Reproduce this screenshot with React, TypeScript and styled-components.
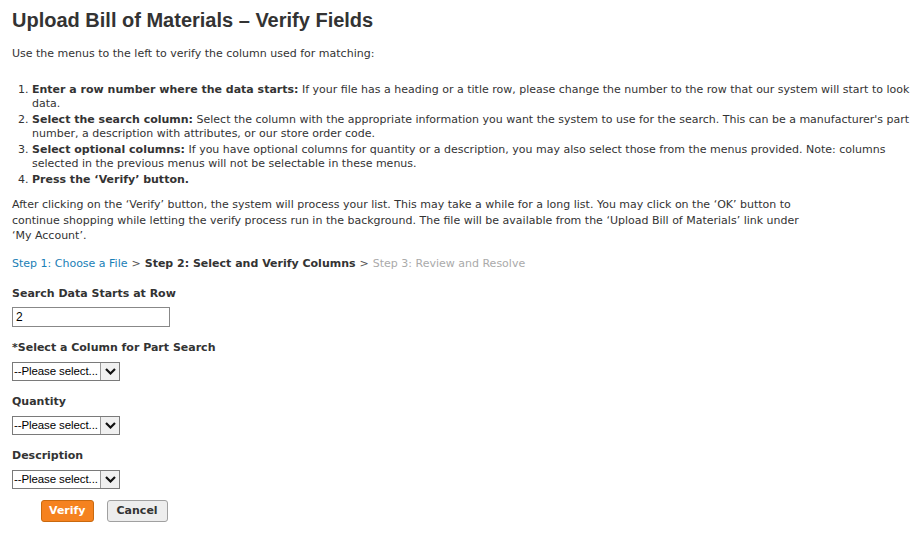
import React, { useState } from 'react'
import styled, { createGlobalStyle } from 'styled-components'

const GlobalStyle = createGlobalStyle`
  body {
    margin: 0;
    background: #fff;
    font-family: "DejaVu Sans", Verdana, sans-serif;
    font-size: 11px;
    color: #333;
  }
`

const Page = styled.div`
  padding: 8px 12px 12px 12px;
`

const Title = styled.h1`
  font-family: "Liberation Sans", Arial, sans-serif;
  font-size: 20px;
  font-weight: bold;
  line-height: 24px;
  color: #333;
  margin: 0 0 14px 0;
`

const Intro = styled.p`
  margin: 0 0 22px 0;
  line-height: 15px;
`

const Steps = styled.ol`
  margin: 0 0 10px 0;
  padding-left: 20px;
  line-height: 14px;

  li {
    margin-bottom: 2px;
  }

  b {
    font-weight: bold;
  }
`

const Note = styled.p`
  margin: 0 0 12px 0;
  line-height: 15.5px;
  max-width: 800px;
`

const Crumbs = styled.div`
  margin-bottom: 16px;
  line-height: 15px;
`

const Crumb = styled.span<{ $state: 'done' | 'current' | 'todo' }>`
  color: ${p => (p.$state === 'done' ? '#1a80b6' : p.$state === 'todo' ? '#aaa' : '#333')};
  font-weight: ${p => (p.$state === 'current' ? 'bold' : 'normal')};
`

const Sep = styled.span`
  color: #555;
  margin: 0 4px;
`

const Field = styled.div`
  display: flex;
  flex-direction: column;
  align-items: flex-start;
  margin-bottom: 14px;
`

const Label = styled.label`
  display: block;
  font-weight: bold;
  line-height: 14px;
  margin-bottom: 6px;
`

const TextInput = styled.input`
  box-sizing: border-box;
  width: 158px;
  height: 20px;
  border: 1px solid #888;
  padding: 0 3px;
  font-family: "Liberation Sans", Arial, sans-serif;
  font-size: 12px;
  color: #000;
  outline: none;
`

const SelectWrap = styled.div`
  position: relative;
  width: 108px;
  height: 19px;
  margin-top: 1px;
`

const Select = styled.select`
  box-sizing: border-box;
  width: 108px;
  height: 19px;
  border: 1px solid #7a7a7a;
  border-radius: 0;
  background: #fff;
  appearance: none;
  padding: 0 0 0 1px;
  font-family: "Liberation Sans", Arial, sans-serif;
  font-size: 11.5px;
  letter-spacing: -0.1px;
  color: #000;
  outline: none;
`

const Arrow = styled.span`
  position: absolute;
  top: 1px;
  right: 1px;
  width: 18px;
  height: 17px;
  border-left: 1px solid #999;
  background: #f0f0f0;
  display: flex;
  align-items: center;
  justify-content: center;
  pointer-events: none;
`

const Buttons = styled.div`
  display: flex;
  gap: 13px;
  padding-left: 29px;
  margin-top: -3px;
`

const Button = styled.button<{ $primary?: boolean }>`
  box-sizing: border-box;
  height: 22px;
  padding: 0 ${p => (p.$primary ? '7px' : '9px')};
  border-radius: 3px;
  font-family: "DejaVu Sans", Verdana, sans-serif;
  font-size: 11px;
  font-weight: bold;
  cursor: pointer;
  border: 1px solid ${p => (p.$primary ? '#c9690f' : '#a0a0a0')};
  background: ${p => (p.$primary ? '#f5821f' : '#ededed')};
  color: ${p => (p.$primary ? '#fff' : '#333')};
`

const Chevron = () => (
  <svg width="11" height="7" viewBox="0 0 11 7">
    <path d="M1 1 L5.5 5.5 L10 1" fill="none" stroke="#111" strokeWidth="2.2" />
  </svg>
)

const Dropdown = ({ id }: { id: string }) => (
  <SelectWrap>
    <Select id={id} defaultValue="">
      <option value="">--Please select...</option>
      <option value="A">Column A</option>
      <option value="B">Column B</option>
    </Select>
    <Arrow><Chevron /></Arrow>
  </SelectWrap>
)

const App = () => {
  const [row, setRow] = useState<string>('2')

  return (
    <Page>
      <GlobalStyle />
      <Title>Upload Bill of Materials – Verify Fields</Title>
      <Intro>Use the menus to the left to verify the column used for matching:</Intro>
      <Steps>
        <li><b>Enter a row number where the data starts:</b> If your file has a heading or a title row, please change the number to the row that our system will start to look data.</li>
        <li><b>Select the search column:</b> Select the column with the appropriate information you want the system to use for the search. This can be a manufacturer's part number, a description with attributes, or our store order code.</li>
        <li><b>Select optional columns:</b> If you have optional columns for quantity or a description, you may also select those from the menus provided. Note: columns selected in the previous menus will not be selectable in these menus.</li>
        <li><b>Press the ‘Verify’ button.</b></li>
      </Steps>
      <Note>
        After clicking on the ‘Verify’ button, the system will process your list. This may take a while for a long list. You may click on the ‘OK’ button to continue shopping while letting the verify process run in the background. The file will be available from the ‘Upload Bill of Materials’ link under ‘My Account’.
      </Note>
      <Crumbs>
        <Crumb $state="done">Step 1: Choose a File</Crumb>
        <Sep>&gt;</Sep>
        <Crumb $state="current">Step 2: Select and Verify Columns</Crumb>
        <Sep>&gt;</Sep>
        <Crumb $state="todo">Step 3: Review and Resolve</Crumb>
      </Crumbs>
      <Field>
        <Label htmlFor="startRow">Search Data Starts at Row</Label>
        <TextInput id="startRow" value={row} onChange={e => setRow(e.target.value)} />
      </Field>
      <Field>
        <Label htmlFor="partCol">*Select a Column for Part Search</Label>
        <Dropdown id="partCol" />
      </Field>
      <Field>
        <Label htmlFor="qtyCol">Quantity</Label>
        <Dropdown id="qtyCol" />
      </Field>
      <Field>
        <Label htmlFor="descCol">Description</Label>
        <Dropdown id="descCol" />
      </Field>
      <Buttons>
        <Button $primary>Verify</Button>
        <Button>Cancel</Button>
      </Buttons>
    </Page>
  )
}

export default App
